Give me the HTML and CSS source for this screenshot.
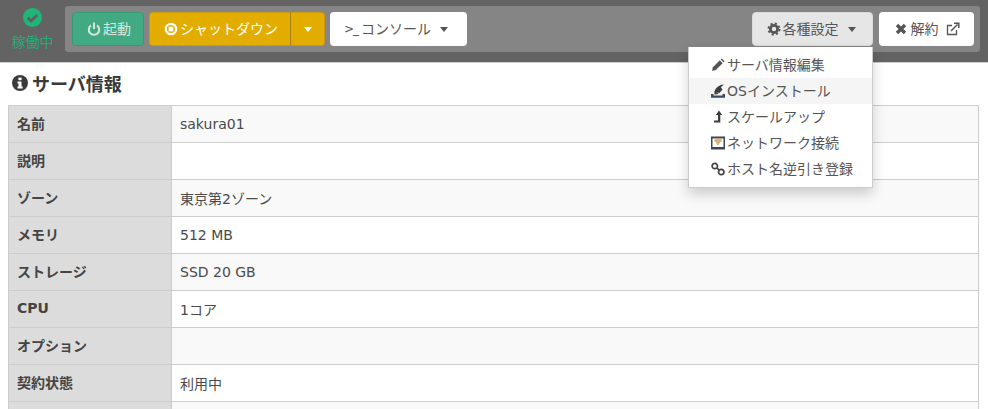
FILE: index.html
```html
<!DOCTYPE html>
<html lang="ja">
<head>
<meta charset="utf-8">
<title>サーバ情報</title>
<link rel="stylesheet" href="styles.css">
</head>
<body>
<header class="topbar">
  <div class="status">
    <svg class="status-icon" viewBox="0 0 18 18"><circle cx="9" cy="9" r="9" fill="#1fb578"/><path d="M4.6 9.2l3.1 3.1 5.7-5.7" fill="none" stroke="#5f5f5f" stroke-width="2.6"/></svg>
    <span class="status-text">稼働中</span>
  </div>
  <div class="toolbar">
    <button class="btn btn-start"><svg class="ico" viewBox="0 0 14 14"><path d="M4 3.400a5.200 5.200 0 1 0 6 0" fill="none" stroke="#d6e6df" stroke-width="2"/><path d="M7 .5v6.500" stroke="#d6e6df" stroke-width="2"/></svg>起動</button>
    <div class="split">
      <button class="btn btn-warn btn-main"><svg class="ico" viewBox="0 0 14 14"><circle cx="7" cy="7" r="5.200" fill="none" stroke="#fff" stroke-width="2.200"/><rect x="4.600" y="4.600" width="4.800" height="4.800" fill="#fff"/></svg>シャットダウン</button>
      <button class="btn btn-warn btn-caret"><span class="caret caret-white"></span></button>
    </div>
    <button class="btn btn-white btn-console"><span class="prompt">&gt;_</span>コンソール<span class="caret caret-gap"></span></button>
    <div class="spacer"></div>
    <div class="menu-wrap">
      <button class="btn btn-open"><svg class="ico" viewBox="0 0 14 14"><circle cx="7" cy="7" r="3.600" fill="none" stroke="#555" stroke-width="2.800"/><circle cx="7" cy="7" r="5.600" fill="none" stroke="#555" stroke-width="1.800" stroke-dasharray="2.200 2.200"/></svg>各種設定<span class="caret caret-gap"></span></button>
      <ul class="menu">
        <li class="menu-item"><svg class="ico" viewBox="0 0 14 14"><path d="M1 13l.9-3.800 6.900-6.900 2.900 2.900-6.900 6.900z" fill="#555"/><path d="M9.700 1.400l1-1 2.900 2.900-1 1z" fill="#555"/></svg>サーバ情報編集</li>
        <li class="menu-item is-hover"><svg class="ico" viewBox="0 0 14 14"><path d="M3.500 8C4 4.500 7 2 10.500.8L13 .5 9.800 3.300l1.700 2.200-3 3.500z" fill="#3c3c3c"/><path d="M3.500 7l4.500 3 -4.500.5z" fill="#3c3c3c"/><path d="M0 10h2.500v1.500h9V10H14v3.800H0z" fill="#3c4a5a"/></svg>OSインストール</li>
        <li class="menu-item"><svg class="ico" viewBox="0 0 14 14"><path d="M8 .5l3.200 4.500H9.300v7.500H3v-2h4V5H4.800z" fill="#3c3c3c"/></svg>スケールアップ</li>
        <li class="menu-item"><svg class="ico" viewBox="0 0 14 14"><rect y=".5" width="14" height="13" fill="#3c4458"/><rect x="1.500" y="2.500" width="11" height="8.500" fill="#fff"/><path d="M3.500 2.500h7v3.500H9v1.500H8V9H6V7.500H5V6H3.500z" fill="#d9b27c"/></svg>ネットワーク接続</li>
        <li class="menu-item"><svg class="ico" viewBox="0 0 14 14"><circle cx="3.800" cy="4" r="2.700" fill="none" stroke="#444" stroke-width="1.700"/><circle cx="10.200" cy="10" r="2.700" fill="none" stroke="#444" stroke-width="1.700"/><path d="M5.800 5.900l2.400 2.200" stroke="#444" stroke-width="1.700"/></svg>ホスト名逆引き登録</li>
      </ul>
    </div>
    <button class="btn btn-white btn-cancel"><svg class="ico ico-x" viewBox="0 0 14 14"><path d="M3 3l8 8M11 3l-8 8" stroke="#555" stroke-width="3.400"/></svg>解約<svg class="ext" viewBox="0 0 14 14"><path d="M10.500 8v4.500h-9v-9H6" fill="none" stroke="#555" stroke-width="1.300"/><path d="M5 9l6.500-6.500M8 1.200h4.800V6" fill="none" stroke="#555" stroke-width="1.500"/></svg></button>
  </div>
</header>
<main class="content">
  <h2 class="title"><svg class="title-icon" viewBox="0 0 16 16"><circle cx="8" cy="8" r="8" fill="#3a3a3a"/><rect x="6.400" y="2.600" width="3.200" height="2.600" fill="#fff"/><path d="M5.500 6.500h4v5h1.200v2H5.500v-2h1V8.500h-1z" fill="#fff"/></svg>サーバ情報</h2>
  <table class="info">
    <tr><th>名前</th><td>sakura01</td></tr>
    <tr><th>説明</th><td></td></tr>
    <tr><th>ゾーン</th><td>東京第2ゾーン</td></tr>
    <tr><th>メモリ</th><td>512 MB</td></tr>
    <tr><th>ストレージ</th><td>SSD 20 GB</td></tr>
    <tr><th>CPU</th><td>1コア</td></tr>
    <tr><th>オプション</th><td></td></tr>
    <tr><th>契約状態</th><td>利用中</td></tr>
    <tr><th>&nbsp;</th><td></td></tr>
  </table>
</main>
</body>
</html>
```
FILE: styles.css
```css
* { box-sizing: border-box; }
html, body { margin: 0; padding: 0; height: 409px; overflow: hidden; background: #fff; }
body { font-family: "DejaVu Sans", "Noto Sans CJK JP", sans-serif; font-size: 14px; color: #4a4a4a; }
.topbar { height: 63px; background: #636363; border-bottom: 1px solid #ccc; display: flex; padding: 6px 8px 0 0; }
.status { width: 65px; display: flex; flex-direction: column; align-items: center; padding-top: 2px; }
.status-icon { width: 19px; height: 19px; margin-right: 1px; }
.status-text { color: #2aaa78; font-size: 14px; line-height: 20px; margin-top: 5px; }
.toolbar { flex: 1; height: 46px; background: #858585; border-radius: 3px; display: flex; align-items: flex-start; padding: 6px 0 0 7px; }
.btn { height: 34px; border: 1px solid transparent; border-radius: 4px; font: inherit; font-size: 14px; line-height: 20px; padding: 0; display: flex; align-items: center; justify-content: center; background: #fff; color: #555; }
.ico { width: 14px; height: 14px; margin-right: 2px; flex: none; }
.btn-start { width: 72px; background: #42aa83; border-color: #369a74; color: #d6e6df; padding-left: 2px; }
.split { display: flex; margin-left: 5px; }
.btn-warn { background: #e3ad00; border-color: #c99a10; color: #fff; }
.btn-main { width: 142px; border-radius: 4px 0 0 4px; border-right-color: #a6801a; padding-left: 2px; }
.btn-caret { width: 34px; border-radius: 0 4px 4px 0; border-left: 0; }
.btn-console { width: 137px; margin-left: 5px; padding-right: 5px; }
.prompt { font-family: "DejaVu Sans", sans-serif; font-size: 12px; letter-spacing: -1px; margin-right: 3px; }
.caret { width: 0; height: 0; border-left: 4.500px solid transparent; border-right: 4.500px solid transparent; border-top: 5px solid #555; }
.caret-white { border-top-color: #fff; }
.caret-gap { margin-left: 9px; }
.spacer { flex: 1; }
.menu-wrap { position: relative; }
.btn-open { width: 121px; background: #e6e6e6; border-color: #dadada; padding-right: 3px; }
.btn-cancel { width: 95px; margin-left: 6px; margin-right: 6px; }
.ico-x { margin-right: 3px; }
.ext { width: 14px; height: 14px; margin-left: 7px; }
.menu { position: absolute; top: 35px; right: 0; width: 185px; height: 141px; margin: 0; padding: 5px 0 0; list-style: none; background: #fff; border: 1px solid #ccc; border-top: 0; box-shadow: 0 6px 12px rgba(0,0,0,.18); z-index: 5; }
.menu-item { height: 26px; line-height: 26px; padding-left: 22px; display: flex; align-items: center; color: #555; white-space: nowrap; }
.is-hover { background: #f5f5f5; }
.content { padding: 0 9px 0 8px; height: 346px; overflow: hidden; }
.title { margin: 0; height: 42px; display: flex; align-items: center; font-size: 18px; font-weight: 700; color: #3a3a3a; padding: 0 0 3px 4px; }
.title-icon { width: 16px; height: 16px; margin-right: 4px; }
.info { width: 971px; border-collapse: collapse; table-layout: fixed; border: 1px solid #ccc; }
.info th, .info td { height: 37px; border: 1px solid #ccc; padding: 0 8px 1px; font-size: 14px; text-align: left; }
.info th { width: 163px; background: #dcdcdc; font-weight: 700; color: #444; padding-bottom: 3px; }
.info td { background: #fff; }
.info tr:nth-child(odd) td { background: #f9f9f9; }
```
